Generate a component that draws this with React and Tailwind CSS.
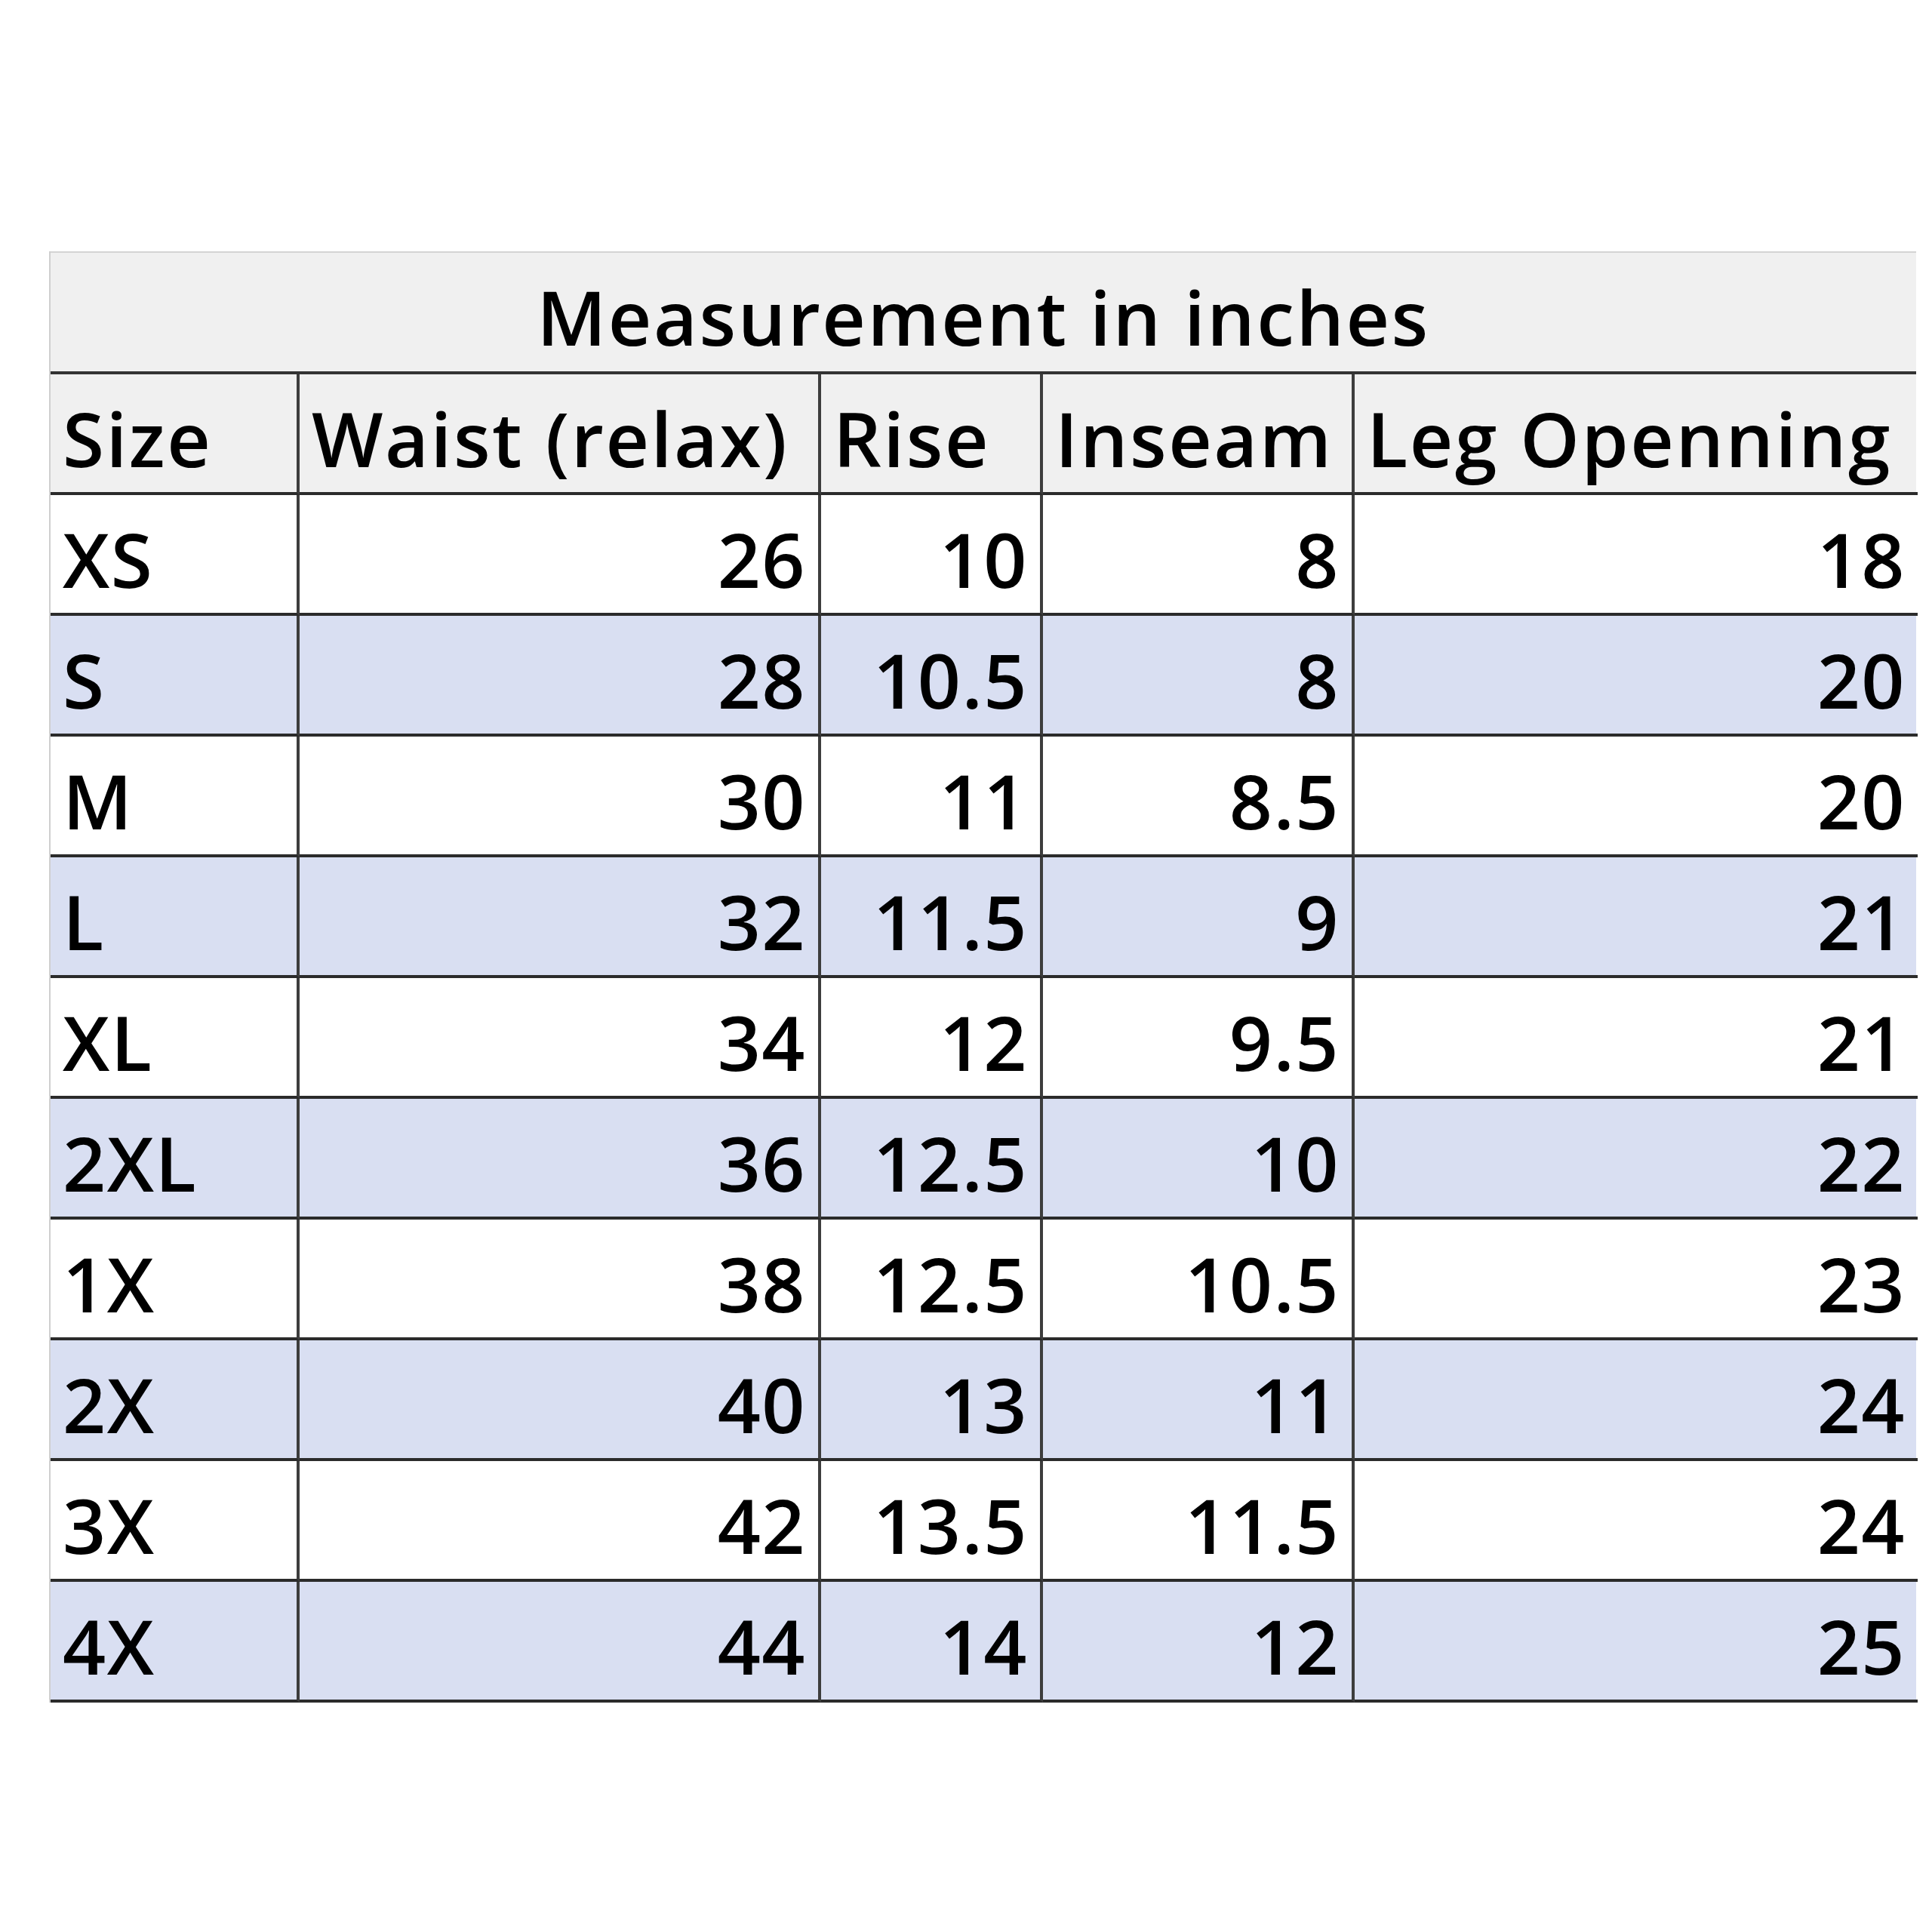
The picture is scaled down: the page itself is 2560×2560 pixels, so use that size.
const headers = ["Size", "Waist (relax)", "Rise", "Inseam", "Leg Openning"];

const rows = [
  ["XS", "26", "10", "8", "18"],
  ["S", "28", "10.5", "8", "20"],
  ["M", "30", "11", "8.5", "20"],
  ["L", "32", "11.5", "9", "21"],
  ["XL", "34", "12", "9.5", "21"],
  ["2XL", "36", "12.5", "10", "22"],
  ["1X", "38", "12.5", "10.5", "23"],
  ["2X", "40", "13", "11", "24"],
  ["3X", "42", "13.5", "11.5", "24"],
  ["4X", "44", "14", "12", "25"],
];

export default function App() {
  return (
    <div
      className="w-[2560px] h-[2560px] bg-white pt-[333px] pl-[65px] text-black"
      style={{ fontFamily: "'Open Sans', Lato, sans-serif" }}
    >
      <div className="w-[2474px] border-l-2 border-[#cfcfcf]">
        {/* titre */}
        <div className="h-[163px] bg-[#f0f0f0] border-t-2 border-[#d4d4d4] border-b-4 border-b-[#333] flex items-center justify-center pt-[10px] text-[100px] font-semibold tracking-[2.5px] leading-none">
          Measurement in inches
        </div>

        {/* en-tête */}
        <div className="grid grid-cols-[330px_691px_294px_413px_746px] bg-[#f0f0f0]">
          {headers.map((h, i) => (
            <div
              key={h}
              className={`h-[160px] border-b-4 border-[#2b2b2b] flex items-center pt-[12px] pl-[16px] text-[100px] font-semibold tracking-[2.5px] leading-none whitespace-nowrap ${
                i < 4 ? "border-r-4 border-r-[#3d3d3d]" : ""
              }`}
            >
              {h}
            </div>
          ))}
        </div>

        {/* lignes */}
        {rows.map((r, ri) => (
          <div
            key={r[0]}
            className={`grid grid-cols-[330px_691px_294px_413px_746px] ${
              ri % 2 === 1 ? "bg-[#d9dff2]" : "bg-white"
            }`}
          >
            {r.map((v, i) => (
              <div
                key={i}
                className={`h-[160px] border-b-4 border-[#2b2b2b] flex items-center pt-[12px] text-[100px] font-semibold tracking-[1.5px] leading-none ${
                  i < 4 ? "border-r-4 border-r-[#3d3d3d]" : ""
                } ${i === 0 ? "justify-start pl-[16px]" : "justify-end pr-[16px]"}`}
              >
                {v}
              </div>
            ))}
          </div>
        ))}
      </div>
    </div>
  );
}
